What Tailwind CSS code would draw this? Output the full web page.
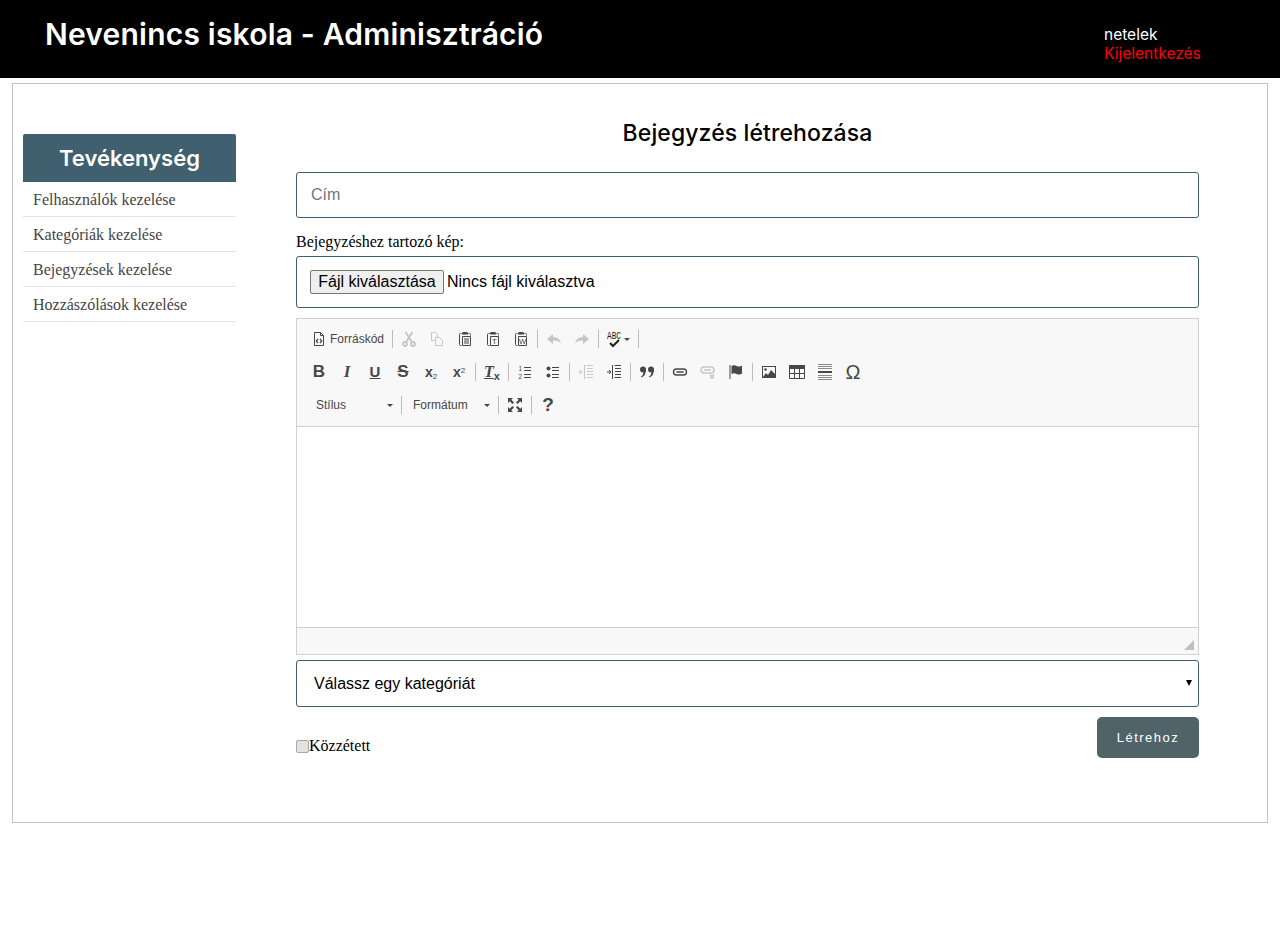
<!DOCTYPE html>
<html lang="hu">
<head>
    <meta charset="UTF-8">
    <meta name="viewport" content="width=device-width, initial-scale=1.0">
    <title>Nevenincs iskola - Adminisztráció</title>
    <script src="https://cdn.jsdelivr.net/npm/@tailwindcss/browser@4"></script>
</head>
<body class="bg-white font-['Liberation_Sans',sans-serif]">
    <!-- header -->
    <header class="h-[78px] bg-black flex text-white font-['Inter',sans-serif]">
        <h1 class="ml-[45px] mt-[14px] text-[30px] leading-[40px] font-semibold tracking-[0.2px] w-[1059px]">Nevenincs iskola - Adminisztráció</h1>
        <div class="pt-[25px] text-[15.5px] leading-[19px]">
            <div>netelek</div>
            <a class="block text-[#ff0000]">Kijelentkezés</a>
        </div>
    </header>

    <main class="mx-[12px] mt-[5px] h-[740px] border border-[#c2c2b8] flex">
        <!-- sidebar -->
        <aside class="ml-[10px] mt-[50px] w-[213px] shrink-0">
            <div class="h-[48px] bg-[#40606f] rounded-t-[2px] flex items-center justify-center text-white text-[22px] font-semibold font-['Inter',sans-serif]">Tevékenység</div>
            <ul class="font-['Liberation_Serif',serif] text-[16px] text-[#444]">
                <li class="h-[35px] pl-[10px] pt-[1px] flex items-center border-b border-[#e4e4e4]">Felhasználók kezelése</li>
                <li class="h-[35px] pl-[10px] pt-[1px] flex items-center border-b border-[#e4e4e4]">Kategóriák kezelése</li>
                <li class="h-[35px] pl-[10px] pt-[1px] flex items-center border-b border-[#e4e4e4]">Bejegyzések kezelése</li>
                <li class="h-[35px] pl-[10px] pt-[1px] flex items-center border-b border-[#e4e4e4]">Hozzászólások kezelése</li>
            </ul>
        </aside>

        <!-- form -->
        <form class="ml-[60px] w-[903px]">
            <h2 class="h-[88px] pt-[34px] text-center text-[23px] leading-[30px] font-medium tracking-[0.1px] text-black font-['Inter',sans-serif]">Bejegyzés létrehozása</h2>
            <input type="text" placeholder="Cím" class="block w-full h-[46px] px-[14px] border border-[#40606f] rounded-[3px] text-[16px] placeholder:text-[#757575]">
            <label class="block h-[38px] pt-[15px] font-['Liberation_Serif',serif] text-[16px] leading-[18px] text-black">Bejegyzéshez tartozó kép:</label>
            <div class="h-[52px] border border-[#40606f] rounded-[3px] pl-[13px] flex items-center text-[16px] text-black">
                <span class="h-[24px] w-[134px] flex items-center justify-center bg-[#efefef] border border-[#767676] rounded-[2px]">Fájl kiválasztása</span>
                <span class="ml-[3px]">Nincs fájl kiválasztva</span>
            </div>

            <!-- editor -->
            <div class="mt-[10px] h-[337px] border border-[#d1d1d1] flex flex-col">
                <div class="h-[108px] bg-[#f8f8f8] border-b border-[#d1d1d1] pl-[8px] pt-[8px] text-[#474747]">
                    <div class="flex items-center h-[24px]">
                        <span class="w-[85px] flex items-center pl-[6px] text-[12px] text-[#474747]">
                            <svg width="16" height="16" viewBox="0 0 16 16" fill="none" stroke="#474747"><path d="M3.500 1.500h6l3 3v10h-9z M9.500 1.500v3h3"/><path d="M7 8l-1.700 2L7 12M9 8l1.700 2L9 12" stroke-width="1.200"/></svg>
                            <span class="ml-[3px]">Forráskód</span>
                        </span>
                        <span class="mx-[2px] w-px h-[18px] bg-[#bcbcbc]"></span>
                        <span class="w-[28px] flex justify-center"><svg width="16" height="16" viewBox="0 0 16 16" fill="none" stroke="#c6c6c6" stroke-width="1.800"><circle cx="4" cy="13" r="2"/><circle cx="12" cy="13" r="2"/><path d="M5 11.200L11.500 1M11 11.200L4.500 1"/></svg></span>
                        <span class="w-[28px] flex justify-center"><svg width="16" height="16" viewBox="0 0 16 16" fill="none" stroke="#c6c6c6"><path d="M2.500 1.500h4l2 2v3M2.500 1.500v8h3"/><path d="M6.500 6.500h4l3 3v5h-7z"/></svg></span>
                        <span class="w-[28px] flex justify-center"><svg width="16" height="16" viewBox="0 0 16 16" fill="none" stroke="#474747"><path d="M4.500 2.500h-1q-1 0-1 1v10q0 1 1 1h1M11.500 2.500h1q1 0 1 1v1"/><path d="M5 2.500q0-1.500 1-1.500h4q1 0 1 1.500v1H5z" fill="#474747" stroke="none"/><path d="M5.500 5.500h8v9h-8zM7 8h5M7 10h5M7 12h5"/></svg></span>
                        <span class="w-[28px] flex justify-center"><svg width="16" height="16" viewBox="0 0 16 16" fill="none" stroke="#474747"><path d="M4.500 2.500h-1q-1 0-1 1v10q0 1 1 1h1M11.500 2.500h1q1 0 1 1v1"/><path d="M5 2.500q0-1.500 1-1.500h4q1 0 1 1.500v1H5z" fill="#474747" stroke="none"/><path d="M5.500 5.500h8v9h-8z"/><text x="9.500" y="13" text-anchor="middle" font-size="8" font-family="Liberation Sans" fill="#474747" stroke="none">T</text></svg></span>
                        <span class="w-[28px] flex justify-center"><svg width="16" height="16" viewBox="0 0 16 16" fill="none" stroke="#474747"><path d="M4.500 2.500h-1q-1 0-1 1v10q0 1 1 1h1M11.500 2.500h1q1 0 1 1v1"/><path d="M5 2.500q0-1.500 1-1.500h4q1 0 1 1.500v1H5z" fill="#474747" stroke="none"/><path d="M5.500 5.500h8v9h-8z"/><text x="9.500" y="13" text-anchor="middle" font-size="7.500" font-family="Liberation Sans" fill="#474747" stroke="none">W</text></svg></span>
                        <span class="mx-[2px] w-px h-[18px] bg-[#bcbcbc]"></span>
                        <span class="w-[28px] flex justify-center"><svg width="16" height="16" viewBox="0 0 16 16" fill="#c6c6c6"><path d="M1 8l6-5v3q6 0 8 6q-3-3-8-2.500V13z"/></svg></span>
                        <span class="w-[28px] flex justify-center"><svg width="16" height="16" viewBox="0 0 16 16" fill="#c6c6c6"><path d="M15 8L9 3v3q-6 0-8 6q3-3 8-2.500V13z"/></svg></span>
                        <span class="mx-[2px] w-px h-[18px] bg-[#bcbcbc]"></span>
                        <span class="w-[35px] flex justify-center items-center">
                            <svg width="17" height="17" viewBox="0 0 17 17" fill="none"><text x="0" y="8" font-size="10" textLength="14" lengthAdjust="spacingAndGlyphs" font-family="Liberation Mono" fill="#222">ABC</text><path d="M3 12l3 3l6-6" stroke="#222" stroke-width="2"/></svg>
                            <span class="w-0 h-0 border-x-[3px] border-x-transparent border-t-[3px] border-t-[#474747]"></span>
                        </span>
                        <span class="mx-[2px] w-px h-[18px] bg-[#bcbcbc]"></span>
                    </div>

                    <div class="flex items-center h-[24px] mt-[9px]">
                        <span class="w-[28px] text-center text-[17px] leading-[16px] font-bold">B</span>
                        <span class="w-[28px] text-center text-[17px] leading-[16px] font-bold italic font-['Liberation_Serif',serif]">I</span>
                        <span class="w-[28px] text-center text-[15px] leading-[16px] font-bold underline">U</span>
                        <span class="w-[28px] text-center text-[17px] leading-[16px] font-bold line-through">S</span>
                        <span class="w-[28px] text-center text-[14px] leading-[16px] font-bold">x<sub class="text-[8px] font-normal">2</sub></span>
                        <span class="w-[28px] text-center text-[14px] leading-[16px] font-bold">x<sup class="text-[8px] font-normal">2</sup></span>
                        <span class="mx-[2px] w-px h-[18px] bg-[#bcbcbc]"></span>
                        <span class="w-[28px] text-center text-[16px] leading-[16px] font-bold italic underline font-['Liberation_Serif',serif]">T<sub class="text-[11px] not-italic no-underline font-['Liberation_Sans',sans-serif]">x</sub></span>
                        <span class="mx-[2px] w-px h-[18px] bg-[#bcbcbc]"></span>
                        <span class="w-[28px] flex justify-center"><svg width="16" height="16" viewBox="0 0 16 16" fill="none" stroke="#474747"><path d="M7 3.500h7M7 6.500h7M7 10.500h7M7 13.500h7"/><text x="1.500" y="7" font-size="6.500" font-family="Liberation Sans" fill="#474747" stroke="none">1</text><text x="1.500" y="14.500" font-size="6.500" font-family="Liberation Sans" fill="#474747" stroke="none">2</text></svg></span>
                        <span class="w-[28px] flex justify-center"><svg width="16" height="16" viewBox="0 0 16 16" fill="#474747"><circle cx="3.500" cy="4.500" r="2"/><circle cx="3.500" cy="11.500" r="2"/><path d="M7 3.500h7M7 6.500h7M7 10.500h7M7 13.500h7" fill="none" stroke="#474747"/></svg></span>
                        <span class="mx-[2px] w-px h-[18px] bg-[#bcbcbc]"></span>
                        <span class="w-[28px] flex justify-center"><svg width="16" height="16" viewBox="0 0 16 16" fill="none" stroke="#c6c6c6"><path d="M8.500 1.500h6.500M9 4.500h6M9 7.500h6M9 10.500h6M8.500 13.500h6.500M6.500 1v14"/><path d="M1 8h4M3 6l-2 2l2 2"/></svg></span>
                        <span class="w-[28px] flex justify-center"><svg width="16" height="16" viewBox="0 0 16 16" fill="none" stroke="#474747"><path d="M8.500 1.500h6.500M9 4.500h6M9 7.500h6M9 10.500h6M8.500 13.500h6.500M6.500 1v14"/><path d="M1 8h4M3 6l2 2l-2 2"/></svg></span>
                        <span class="mx-[2px] w-px h-[18px] bg-[#bcbcbc]"></span>
                        <span class="w-[28px] flex justify-center"><svg width="16" height="16" viewBox="0 0 16 16" fill="#474747"><circle cx="4" cy="5.500" r="3"/><circle cx="12" cy="5.500" r="3"/><path d="M7 5.500q0 6-4.500 8l-.5-1q2.500-1.500 2.500-4zM15 5.500q0 6-4.500 8l-.5-1q2.500-1.500 2.500-4z"/></svg></span>
                        <span class="mx-[2px] w-px h-[18px] bg-[#bcbcbc]"></span>
                        <span class="w-[28px] flex justify-center"><svg width="16" height="16" viewBox="0 0 16 16" fill="none" stroke="#474747" stroke-width="1.400"><rect x="1.500" y="5" width="13" height="6" rx="3"/><path d="M4.500 8h7" stroke-width="1.500"/></svg></span>
                        <span class="w-[28px] flex justify-center"><svg width="16" height="16" viewBox="0 0 16 16" fill="none" stroke="#c6c6c6" stroke-width="1.400"><rect x="1" y="3" width="13" height="6" rx="3"/><path d="M4 6h7" stroke-width="1.500"/><path d="M10 10.500l4 4M14 10.500l-4 4" stroke-width="1.600"/></svg></span>
                        <span class="w-[28px] flex justify-center"><svg width="16" height="16" viewBox="0 0 16 16" fill="#474747"><path d="M1.500 1h1v14h-1z"/><path d="M3.500 2q3-1.500 5 0q3 1.200 5.500-.2v8q-2.500 1.400-5.500.2q-2-1.500-5 0z"/></svg></span>
                        <span class="mx-[2px] w-px h-[18px] bg-[#bcbcbc]"></span>
                        <span class="w-[28px] flex justify-center"><svg width="16" height="16" viewBox="0 0 16 16" fill="#474747"><path d="M1 2h14v12H1z M2 3v10h12V3z" fill-rule="evenodd"/><circle cx="4.500" cy="5.500" r="1.300"/><path d="M2 13l3-4l2 2l3-5l4 4v3z"/></svg></span>
                        <span class="w-[28px] flex justify-center"><svg width="16" height="16" viewBox="0 0 16 16" fill="none" stroke="#474747"><path d="M.5 1.500h15v13H.5z M.5 9.500h15M5.500 5v9.500M10.500 5v9.500"/><path d="M0 1h16v4H0z" fill="#474747" stroke="none"/></svg></span>
                        <span class="w-[28px] flex justify-center"><svg width="16" height="16" viewBox="0 0 16 16" fill="none" stroke="#8a8a8a"><path d="M1 .5h14M1 2.500h14M1 4.500h14M1 11.500h14M1 13.500h14M1 15.500h14"/><path d="M1 8h14" stroke="#474747" stroke-width="2"/></svg></span>
                        <span class="w-[28px] text-center text-[20px] leading-[16px] font-normal">Ω</span>
                    </div>

                    <div class="flex items-center h-[24px] mt-[9px] text-[12px]">
                        <span class="w-[94px] flex items-center pl-[11px] pr-[6px] justify-between"><span>Stílus</span><span class="w-0 h-0 border-x-[3px] border-x-transparent border-t-[3px] border-t-[#474747]"></span></span>
                        <span class="mx-[2px] w-px h-[18px] bg-[#bcbcbc]"></span>
                        <span class="w-[92px] flex items-center pl-[9px] pr-[6px] justify-between"><span>Formátum</span><span class="w-0 h-0 border-x-[3px] border-x-transparent border-t-[3px] border-t-[#474747]"></span></span>
                        <span class="mx-[2px] w-px h-[18px] bg-[#bcbcbc]"></span>
                        <span class="w-[28px] flex justify-center"><svg width="16" height="16" viewBox="0 0 16 16" fill="#474747"><path d="M1 1h5l-1.700 1.700L7 5.400 5.400 7 2.700 4.300 1 6zM15 1v5l-1.700-1.700L10.600 7 9 5.400l2.700-2.700L10 1zM1 15v-5l1.700 1.700L5.400 9 7 10.600l-2.700 2.700L6 15zM15 15h-5l1.700-1.700L9 10.600 10.600 9l2.700 2.700L15 10z"/></svg></span>
                        <span class="mx-[2px] w-px h-[18px] bg-[#bcbcbc]"></span>
                        <span class="w-[28px] text-center text-[19px] leading-[16px] font-bold">?</span>
                    </div>
                </div>
                <div class="flex-1 bg-white"></div>
                <div class="h-[27px] bg-[#f8f8f8] border-t border-[#d1d1d1] flex justify-end items-end pr-[4px] pb-[4px]">
                    <svg width="10" height="10" viewBox="0 0 10 10" fill="#bfbfbf"><path d="M10 0v10H0z"/></svg>
                </div>
            </div>

            <div class="relative mt-[5px]">
                <select class="appearance-none block w-full h-[47px] pl-[17px] pr-[6px] border border-[#40606f] rounded-[3px] bg-white text-[16px] text-black">
                    <option>Válassz egy kategóriát</option>
                </select>
                <span class="absolute right-[7px] top-[20px] w-0 h-0 border-x-[3px] border-x-transparent border-t-[6px] border-t-black"></span>
            </div>

            <div class="mt-[10px] flex justify-between items-start">
                <label class="mt-[20px] flex items-center font-['Liberation_Serif',serif] text-[16px] leading-[18px] text-black">
                    <input type="checkbox" class="appearance-none w-[13px] h-[13px] bg-[#e2e2e2] border border-[#a8a8a8] rounded-[2px]">Közzétett
                </label>
                <button type="button" class="w-[102px] h-[41px] bg-[#4f6368] rounded-[5px] text-white text-[13px] tracking-[1.500px]">Létrehoz</button>
            </div>
        </form>
    </main>
</body>
</html>
